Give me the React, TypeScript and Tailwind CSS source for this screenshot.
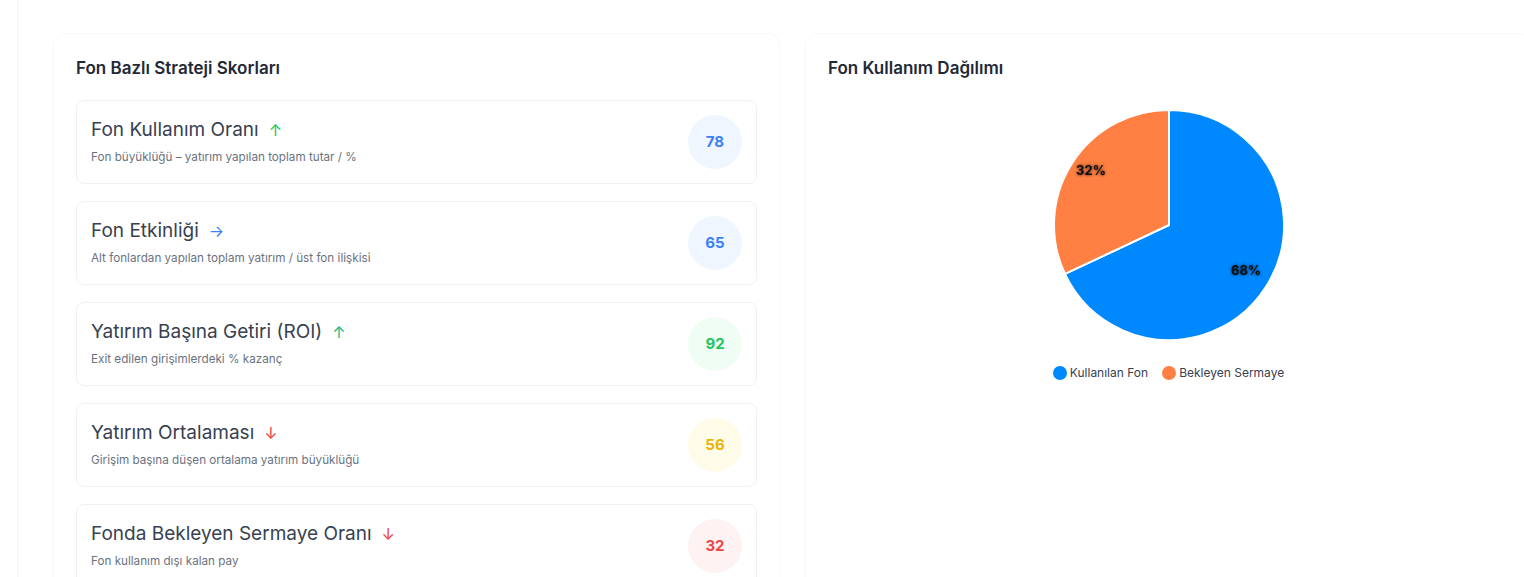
const SCORES = [
  { title: "Fon Kullanım Oranı", desc: "Fon büyüklüğü – yatırım yapılan toplam tutar / %", score: 78, arrow: "↑", arrowCls: "text-[#22c55e]", circleCls: "bg-[#eff6ff] text-[#3b82f6]" },
  { title: "Fon Etkinliği", desc: "Alt fonlardan yapılan toplam yatırım / üst fon ilişkisi", score: 65, arrow: "→", arrowCls: "text-[#3b82f6]", circleCls: "bg-[#eff6ff] text-[#3b82f6]" },
  { title: "Yatırım Başına Getiri (ROI)", desc: "Exit edilen girişimlerdeki % kazanç", score: 92, arrow: "↑", arrowCls: "text-[#10b981]", circleCls: "bg-[#f0fdf4] text-[#22c55e]" },
  { title: "Yatırım Ortalaması", desc: "Girişim başına düşen ortalama yatırım büyüklüğü", score: 56, arrow: "↓", arrowCls: "text-[#ef4444]", circleCls: "bg-[#fefce8] text-[#eab308]" },
  { title: "Fonda Bekleyen Sermaye Oranı", desc: "Fon kullanım dışı kalan pay", score: 32, arrow: "↓", arrowCls: "text-[#ef4444]", circleCls: "bg-[#fef2f2] text-[#ef4444]" },
];

function Pie() {
  return (
    <svg width="300" height="250" viewBox="0 0 300 250" className="mx-auto block">
      <defs>
        <filter id="lblShadow" x="-30%" y="-30%" width="160%" height="160%">
          <feDropShadow dx="0" dy="0" stdDeviation="1.5" floodColor="#000" floodOpacity="0.8" />
        </filter>
      </defs>
      <path d="M150,125 L150,10 A115,115 0 1 1 45.95,173.97 Z" fill="#0088FE" stroke="#fff" strokeWidth="2" strokeLinejoin="round" />
      <path d="M150,125 L45.95,173.97 A115,115 0 0 1 150,10 Z" fill="#FF8042" stroke="#fff" strokeWidth="2" strokeLinejoin="round" />
      <text x="227" y="170" textAnchor="middle" dominantBaseline="central" fontSize="13" fontWeight="700" fill="#111" filter="url(#lblShadow)">
        68%
      </text>
      <text x="72" y="70" textAnchor="middle" dominantBaseline="central" fontSize="13" fontWeight="700" fill="#111" filter="url(#lblShadow)">
        32%
      </text>
    </svg>
  );
}

export default function App() {
  return (
    <div className="h-[577px] w-full overflow-hidden bg-white font-['Inter',sans-serif]">
      <div className="ml-[17px] border-l border-[#f6f6f6] pl-[35px] pt-[33px]">
        <div className="grid grid-cols-[727px_727px] gap-[25px]">
          <section className="rounded-xl border border-[#f9f9f9] bg-white p-[22px]">
            <h2 className="text-[17px] font-semibold leading-6 text-[#1f2937]">Fon Bazlı Strateji Skorları</h2>
            <div className="mt-5 flex flex-col gap-[17px]">
              {SCORES.map((s) => (
                <div
                  key={s.title}
                  className="flex items-center justify-between rounded-lg border border-[#f1f1f1] bg-white p-[14px]"
                >
                  <div className="-mt-[2px]">
                    <div className="flex items-center gap-[10px]">
                      <span className="text-[19px] leading-7 text-[#374151]">{s.title}</span>
                      <span className={`text-base leading-7 ${s.arrowCls}`}>{s.arrow}</span>
                    </div>
                    <p className="mt-[5px] text-[11.7px] text-[#6b7280]">{s.desc}</p>
                  </div>
                  <div className={`flex h-[54px] w-[54px] shrink-0 items-center justify-center rounded-full text-[15px] font-bold ${s.circleCls}`}>
                    {s.score}
                  </div>
                </div>
              ))}
            </div>
          </section>
          <section className="rounded-xl border border-[#f9f9f9] bg-white p-[22px]">
            <h2 className="text-[17px] font-semibold leading-6 text-[#1f2937]">Fon Kullanım Dağılımı</h2>
            <div className="mt-5">
              <Pie />
              <div className="mt-[15px] flex items-center justify-center gap-[14px] text-xs text-[#374151]">
                <div className="flex items-center gap-[3px]">
                  <span className="h-[14px] w-[14px] rounded-full bg-[#0088FE]" />
                  <span>Kullanılan Fon</span>
                </div>
                <div className="flex items-center gap-[3px]">
                  <span className="h-[14px] w-[14px] rounded-full bg-[#FF8042]" />
                  <span>Bekleyen Sermaye</span>
                </div>
              </div>
            </div>
          </section>
        </div>
      </div>
    </div>
  );
}
